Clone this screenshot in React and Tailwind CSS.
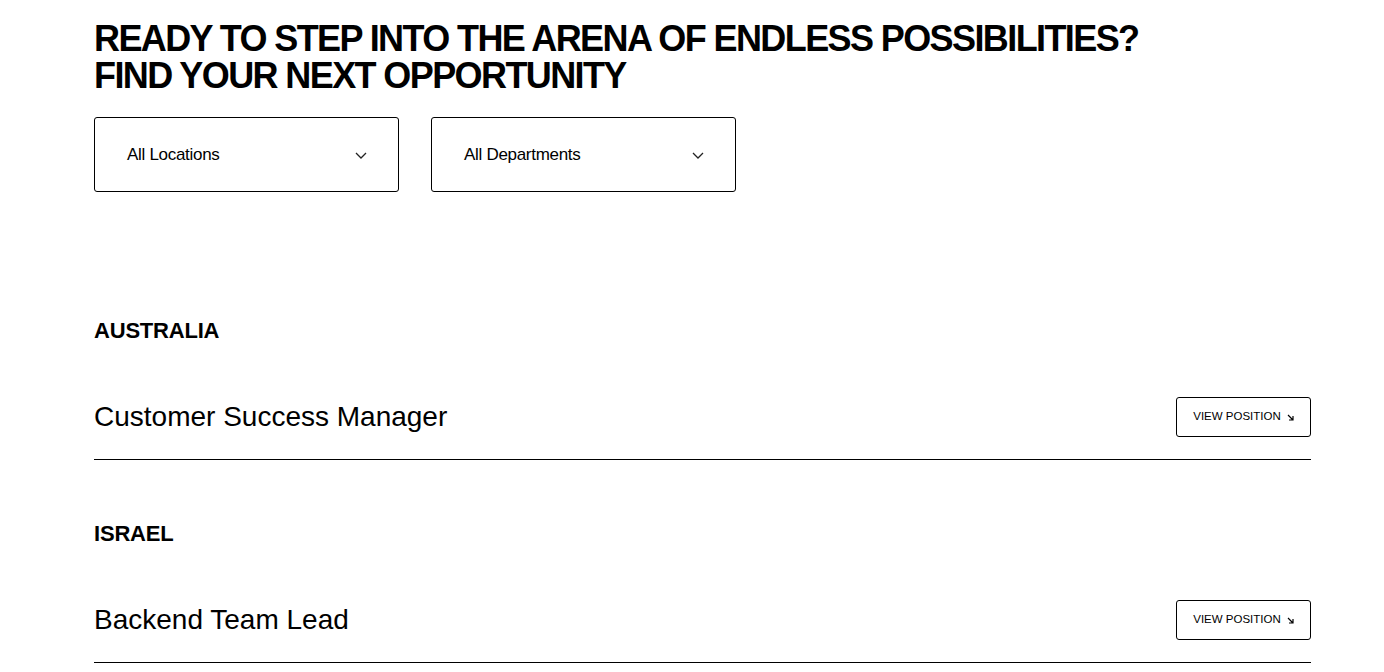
const sections = [
  { country: "AUSTRALIA", jobs: ["Customer Success Manager"] },
  { country: "ISRAEL", jobs: ["Backend Team Lead"] },
];

function Chevron() {
  return (
    <svg width="12" height="7" viewBox="0 0 12 7" fill="none" stroke="#222" strokeWidth="1.3">
      <path d="M1 1 L6 6 L11 1" />
    </svg>
  );
}

function Select({ label }) {
  return (
    <button className="flex items-center justify-between w-[305px] h-[75px] border border-black rounded-[3px] pl-[32px] pr-[31px] pt-[1px] text-[17px] tracking-[-0.3px] text-black">
      <span>{label}</span>
      <Chevron />
    </button>
  );
}

function ArrowDownRight() {
  return (
    <svg width="7" height="7" viewBox="0 0 7 7" fill="none" stroke="black" strokeWidth="1.2">
      <path d="M1 1 L6 6 M6 2 L6 6 L2 6" />
    </svg>
  );
}

export default function App() {
  return (
    <div className="min-h-screen bg-white text-black pl-[94px] pr-[73px] pt-[20px] pb-10" style={{ fontFamily: '"Liberation Sans", Arial, sans-serif' }}>
      <h1 className="text-[36px] leading-[37px] font-bold tracking-[-1.6px] whitespace-nowrap">
        READY TO STEP INTO THE ARENA OF ENDLESS POSSIBILITIES?
        <br />
        FIND YOUR NEXT OPPORTUNITY
      </h1>

      <div className="flex gap-[32px] mt-[23px]">
        <Select label="All Locations" />
        <Select label="All Departments" />
      </div>

      <div className="mt-[127px] flex flex-col gap-[62px]">
        {sections.map((s) => (
          <section key={s.country}>
            <h2 className="text-[22px] leading-[24px] font-bold tracking-[-0.2px]">{s.country}</h2>
            <div className="mt-[32px]">
              {s.jobs.map((job) => (
                <div key={job} className="flex items-center justify-between py-[22px] border-b border-black">
                  <span className="text-[28px] leading-[40px]">{job}</span>
                  <button className="flex items-center gap-[6px] h-[40px] w-[135px] justify-center border border-black rounded-[3px] text-[11.5px]">
                    VIEW POSITION
                    <ArrowDownRight />
                  </button>
                </div>
              ))}
            </div>
          </section>
        ))}
      </div>
    </div>
  );
}
